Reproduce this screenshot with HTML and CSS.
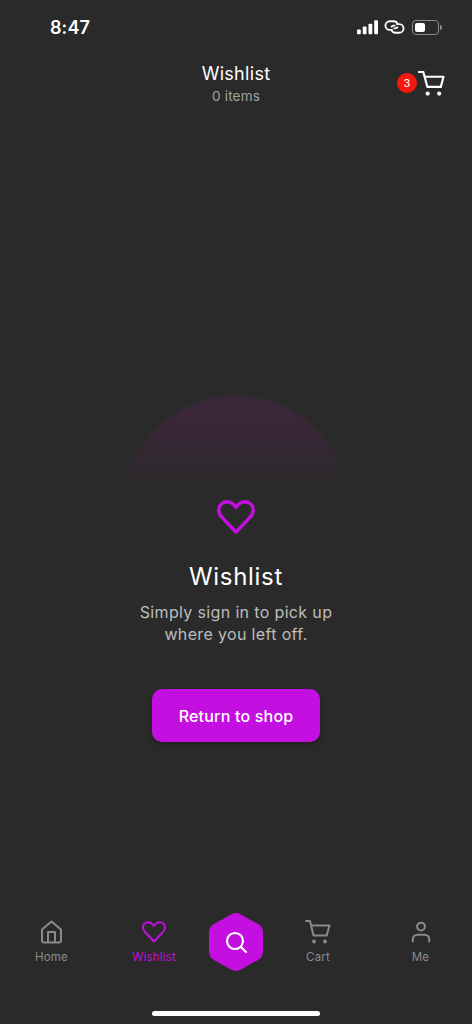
FILE: index.html
```html
<!DOCTYPE html>
<html lang="en">
<head>
    <meta charset="UTF-8">
    <meta name="viewport" content="width=device-width, initial-scale=1.0">
    <title>Wishlist</title>
    <link rel="stylesheet" href="styles.css">
</head>
<body>
    <div class="screen">
        <div class="status-bar">
            <span class="time">8:47</span>
            <div class="status-icons">
                <svg width="21" height="15" viewBox="0 0 22 15" fill="#fff">
                    <rect x="0" y="9.500" width="4" height="5" rx="1"/>
                    <rect x="6" y="6.500" width="4" height="8" rx="1"/>
                    <rect x="12" y="3.500" width="4" height="11" rx="1"/>
                    <rect x="18" y="0" width="4" height="14.500" rx="1"/>
                </svg>
                <svg width="21" height="14" viewBox="0 0 22 14" fill="none" stroke="#fff" stroke-width="1.900">
                    <path d="M9 10H6A4.500 4.500 0 0 1 6 1h4a4.500 4.500 0 0 1 4.400 3.600"/>
                    <path d="M13 4h3a4.500 4.500 0 0 1 0 9h-4a4.500 4.500 0 0 1-4.400-3.600"/>
                    <path d="M7.600 7.400a3 3 0 0 1 3-1.900h1.400M14.400 6.600a3 3 0 0 1-3 1.900H10"/>
                </svg>
                <div class="battery">
                    <div class="battery-body"><div class="battery-level"></div></div>
                    <div class="battery-tip"></div>
                </div>
            </div>
        </div>

        <header class="top-bar">
            <div class="top-title">
                <h1>Wishlist</h1>
                <p>0 items</p>
            </div>
            <div class="top-cart">
                <span class="badge">3</span>
                <svg width="27" height="25" viewBox="0 0 28 26" fill="none" stroke="#fff" stroke-width="2.200" stroke-linecap="round" stroke-linejoin="round">
                    <path d="M1 1h4.500l4.200 15.500h14"/>
                    <path d="M7 6h19.500l-2.800 10.500"/>
                    <circle cx="10" cy="23.500" r="2.200" fill="#fff" stroke="none"/>
                    <circle cx="22" cy="23.500" r="2.200" fill="#fff" stroke="none"/>
                </svg>
            </div>
        </header>

        <main class="content">
            <div class="glow"></div>
            <svg class="big-heart" width="38" height="34" viewBox="0 0 38 34" fill="none" stroke="#c30fdf" stroke-width="3.400" stroke-linejoin="round">
                <path d="M19 7.500C16.500 3.500 13.500 1.700 10 1.700 5.200 1.700 1.700 5.500 1.700 10c0 3 1.300 5.300 3.300 7.400L19 32 33 17.400c2-2.100 3.300-4.400 3.300-7.400 0-4.500-3.500-8.300-8.300-8.300-3.500 0-6.500 1.800-9 5.800z"/>
            </svg>
            <h2>Wishlist</h2>
            <p class="message">Simply sign in to pick up<br>where you left off.</p>
            <button class="shop-btn" type="button">Return to shop</button>
        </main>

        <nav class="bottom-nav">
            <a class="nav-item" href="#">
                <svg width="24" height="24" viewBox="0 0 24 24" fill="none" stroke="#8a8a8a" stroke-width="2" stroke-linejoin="round">
                    <path d="M2 9.500 11.500 1.500 21 9.500V20.500a2 2 0 0 1-2 2H4a2 2 0 0 1-2-2z"/>
                    <path d="M8 22.500V12h7v10.500"/>
                </svg>
                <span>Home</span>
            </a>
            <a class="nav-item active" href="#">
                <svg width="24" height="22" viewBox="0 0 24 22" fill="none" stroke="#c30fdf" stroke-width="2" stroke-linejoin="round">
                    <path d="M12 5C10.400 2.500 8.500 1.200 6.300 1.200 3.300 1.200 1 3.600 1 6.500c0 2 .9 3.500 2.200 4.800L12 20.500l8.800-9.200C22.100 10 23 8.500 23 6.500c0-2.900-2.300-5.300-5.300-5.300C15.500 1.200 13.600 2.500 12 5z"/>
                </svg>
                <span>Wishlist</span>
            </a>
            <a class="search-btn" href="#">
                <svg width="54" height="58" viewBox="0 0 54 58">
                    <path d="M22 1.500a10 10 0 0 1 10 0L49 11a10 10 0 0 1 5 8.700v18.600a10 10 0 0 1-5 8.700L32 56.500a10 10 0 0 1-10 0L5 47a10 10 0 0 1-5-8.700V19.700A10 10 0 0 1 5 11z" fill="#c30fdf"/>
                    <g fill="none" stroke="#fff" stroke-width="2.200" stroke-linecap="round">
                        <circle cx="26" cy="28" r="8"/>
                        <path d="M32 34l5 5"/>
                    </g>
                </svg>
            </a>
            <a class="nav-item" href="#">
                <svg width="26" height="24" viewBox="0 0 26 24" fill="none" stroke="#8a8a8a" stroke-width="2" stroke-linecap="round" stroke-linejoin="round">
                    <path d="M1 1h4l3.500 14.500h13"/>
                    <path d="M6.200 5.500H24.500l-2.800 10"/>
                    <circle cx="9" cy="21.500" r="1.900" fill="#8a8a8a" stroke="none"/>
                    <circle cx="20" cy="21.500" r="1.900" fill="#8a8a8a" stroke="none"/>
                </svg>
                <span>Cart</span>
            </a>
            <a class="nav-item" href="#">
                <svg width="20" height="24" viewBox="0 0 22 24" fill="none" stroke="#8a8a8a" stroke-width="2.200" stroke-linecap="round">
                    <circle cx="11" cy="6" r="4.300"/>
                    <path d="M2 22.500v-2.500a5 5 0 0 1 5-5h8a5 5 0 0 1 5 5v2.500"/>
                </svg>
                <span>Me</span>
            </a>
        </nav>

        <div class="home-indicator"></div>
    </div>
</body>
</html>
```

FILE: styles.css
```css
* {
    box-sizing: border-box;
}

body {
    margin: 0;
    background: #2a2a2a;
    font-family: 'Inter', 'Liberation Sans', sans-serif;
    color: #ffffff;
}

.screen {
    width: 472px;
    height: 1024px;
    display: flex;
    flex-direction: column;
    overflow: hidden;
}

/* status bar */
.status-bar {
    height: 54px;
    padding: 0 30px 0 50px;
    display: flex;
    justify-content: space-between;
    align-items: center;
}

.time {
    font-size: 18px;
    font-weight: 600;
    letter-spacing: 0.1px;
}

.status-icons {
    display: flex;
    align-items: center;
    gap: 6px;
}

.battery {
    display: flex;
    align-items: center;
    gap: 1px;
    margin-left: 1px;
}

.battery-body {
    width: 27px;
    height: 15px;
    border: 1px solid #8a8a8a;
    border-radius: 4px;
    padding: 2px;
}

.battery-level {
    width: 10px;
    height: 100%;
    background: #ffffff;
    border-radius: 2px;
}

.battery-tip {
    width: 2px;
    height: 5px;
    background: #8a8a8a;
    border-radius: 0 2px 2px 0;
}

/* top bar */
.top-bar {
    height: 58px;
    padding: 0 27px 0 0;
    display: flex;
    justify-content: flex-end;
    align-items: center;
    position: relative;
}

.top-title {
    position: absolute;
    top: 0;
    left: 0;
    right: 0;
    padding-top: 7px;
    text-align: center;
}

.top-title h1 {
    margin: 0;
    font-size: 18px;
    line-height: 26px;
    font-weight: 400;
    letter-spacing: 0.3px;
}

.top-title p {
    margin: 0;
    font-size: 13.500px;
    line-height: 18px;
    color: #a3a3a3;
    letter-spacing: 0.2px;
}

.top-cart {
    display: flex;
    align-items: center;
    gap: 1px;
}

.badge {
    width: 20px;
    height: 20px;
    border-radius: 50%;
    background: #f2190f;
    font-size: 11px;
    display: flex;
    justify-content: center;
    align-items: center;
}

/* middle */
.content {
    flex: 1;
    display: flex;
    flex-direction: column;
    align-items: center;
    padding-top: 284px;
}

.glow {
    width: 228px;
    height: 90px;
    clip-path: circle(114px at 50% 114px);
    background: linear-gradient(180deg, #3b2739 0%, #392738 35%, #2a2a2a 100%);
}

.big-heart {
    margin-top: 14px;
}

.content h2 {
    margin: 25px 0 0;
    font-size: 24px;
    line-height: 36px;
    font-weight: 400;
    letter-spacing: 0.7px;
}

.message {
    margin: 6px 0 0;
    font-size: 16px;
    line-height: 22px;
    text-align: center;
    color: #bdbdbd;
    letter-spacing: 0.35px;
}

.shop-btn {
    margin-top: 44px;
    width: 168px;
    height: 53px;
    background: #c30fdf;
    border: none;
    border-radius: 10px;
    box-shadow: 0 2px 5px rgba(0, 0, 0, 0.35);
    color: #ffffff;
    font-family: inherit;
    font-size: 16px;
    font-weight: 500;
    letter-spacing: 0.2px;
}

/* bottom nav */
.bottom-nav {
    height: 58px;
    margin-bottom: 40px;
    display: grid;
    grid-template-columns: 103px 102px 62px 102px 103px;
    align-items: center;
}

.nav-item {
    display: flex;
    flex-direction: column;
    align-items: center;
    gap: 6px;
    color: #8a8a8a;
    font-size: 11.500px;
    line-height: 14px;
    text-decoration: none;
    letter-spacing: 0.2px;
}

.nav-item svg {
    height: 24px;
}

.nav-item.active {
    color: #c30fdf;
}

.search-btn {
    display: flex;
    justify-content: center;
}

.home-indicator {
    width: 168px;
    height: 5px;
    margin: 0 auto 8px;
    background: #ffffff;
    border-radius: 3px;
}
```
